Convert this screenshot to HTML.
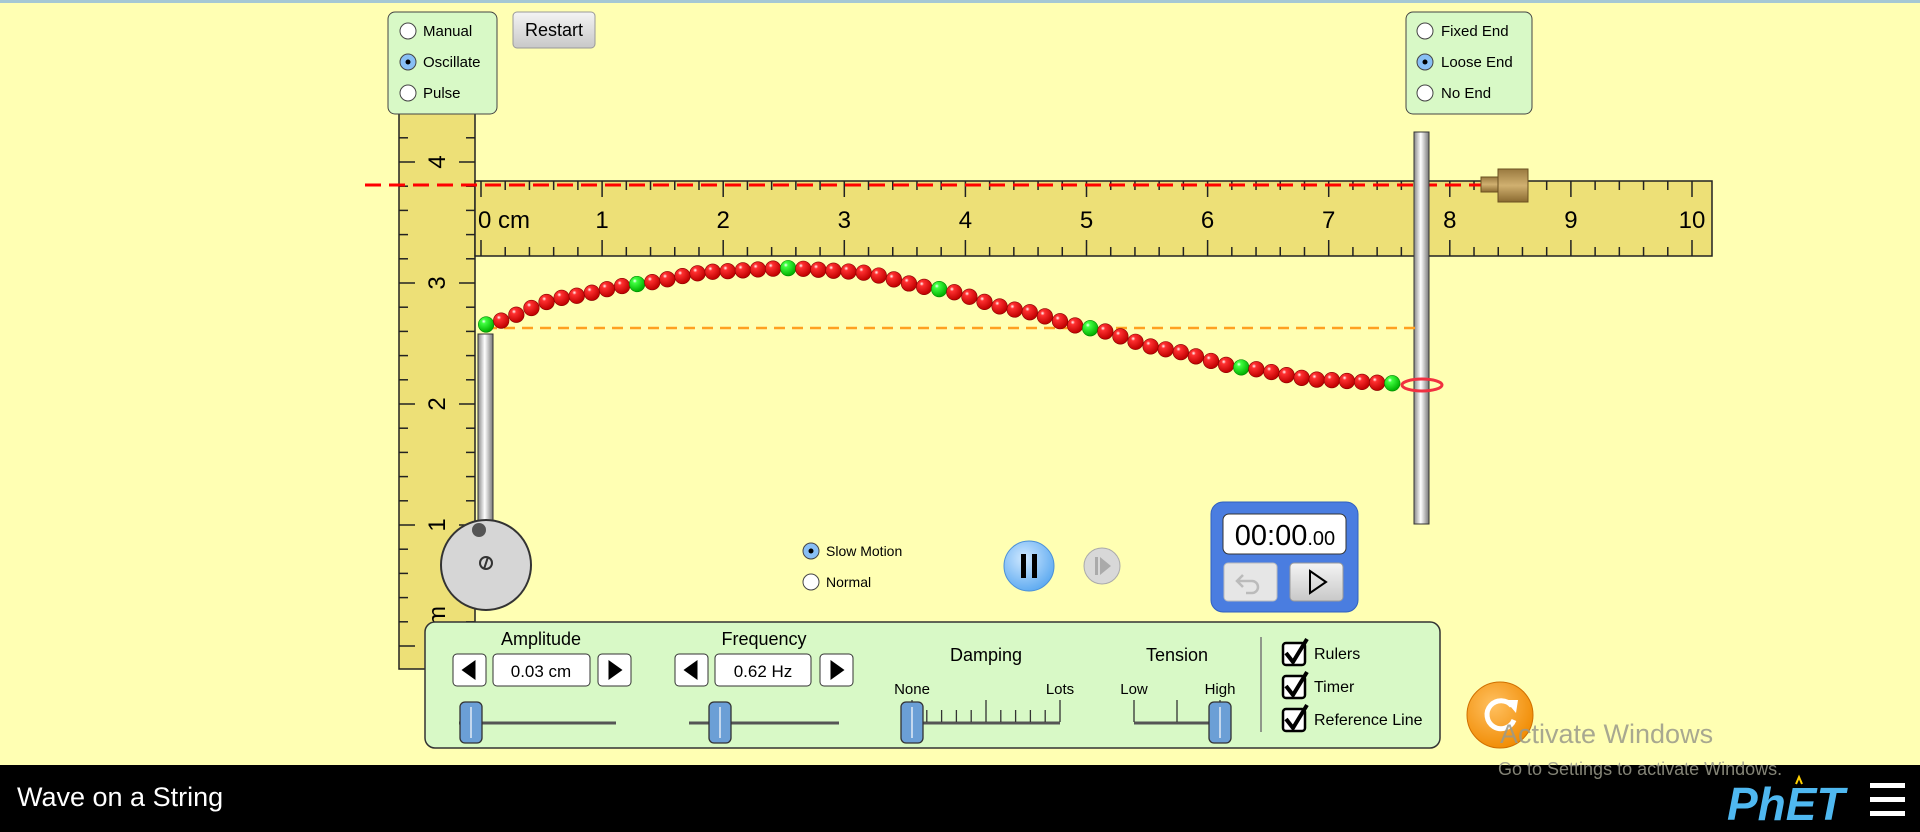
<!DOCTYPE html>
<html><head><meta charset="utf-8"><style>
html,body{margin:0;padding:0;width:1920px;height:832px;overflow:hidden;background:#ffffb3;font-family:"Liberation Sans",Arial,sans-serif}
svg{position:absolute;left:0;top:0}
text{font-family:"Liberation Sans",Arial,sans-serif}
</style></head><body>
<svg id="s" width="1920" height="832" viewBox="0 0 1920 832">
<defs>
<radialGradient id="rb" cx="35%" cy="30%" r="70%"><stop offset="0" stop-color="#fff"/><stop offset="0.2" stop-color="#ff3030"/><stop offset="1" stop-color="#c00000"/></radialGradient>
<radialGradient id="gb" cx="35%" cy="30%" r="70%"><stop offset="0" stop-color="#fff"/><stop offset="0.2" stop-color="#40ff40"/><stop offset="1" stop-color="#00b000"/></radialGradient>
<linearGradient id="rod" x1="0" x2="1"><stop offset="0" stop-color="#888"/><stop offset="0.45" stop-color="#fff"/><stop offset="1" stop-color="#777"/></linearGradient>
<linearGradient id="brass" x1="0" y1="0" x2="0" y2="1"><stop offset="0" stop-color="#9a7a40"/><stop offset="0.5" stop-color="#d0b070"/><stop offset="1" stop-color="#8a6a30"/></linearGradient>
<radialGradient id="pb" cx="40%" cy="35%" r="70%"><stop offset="0" stop-color="#cfe8ff"/><stop offset="1" stop-color="#5aa8f0"/></radialGradient>
<radialGradient id="or" cx="40%" cy="35%" r="70%"><stop offset="0" stop-color="#ffc060"/><stop offset="1" stop-color="#f08a00"/></radialGradient>
<linearGradient id="btn" x1="0" y1="0" x2="0" y2="1"><stop offset="0" stop-color="#f4f4f4"/><stop offset="1" stop-color="#c8c8c8"/></linearGradient>
</defs>
<rect x="0" y="0" width="1920" height="3" fill="#a5c8d4"/>
<rect x="399" y="110" width="76" height="559" fill="#ede077" stroke="#222" stroke-width="1.5"/>
<g id="vt"></g>
<rect x="475" y="181" width="1237" height="75" fill="#ede077" stroke="#222" stroke-width="1.5"/>
<g id="ht"></g>
<rect x="388" y="12" width="109" height="102" rx="7" fill="#d8f9c6" stroke="#444" stroke-width="1"/>
<g font-size="15" fill="#000">
<circle cx="408" cy="31" r="8" fill="#fff" stroke="#444"/><text x="423" y="36">Manual</text>
<circle cx="408" cy="62" r="8" fill="#88bff5" stroke="#444"/><circle cx="408" cy="62" r="2.5" fill="#000"/><text x="423" y="67">Oscillate</text>
<circle cx="408" cy="93" r="8" fill="#fff" stroke="#444"/><text x="423" y="98">Pulse</text>
</g>
<rect x="513" y="12" width="82" height="36" rx="4" fill="url(#btn)" stroke="#999"/>
<text x="554" y="36" font-size="18" text-anchor="middle">Restart</text>
<rect x="1406" y="12" width="126" height="102" rx="7" fill="#d8f9c6" stroke="#444" stroke-width="1"/>
<g font-size="15" fill="#000">
<circle cx="1425" cy="31" r="8" fill="#fff" stroke="#444"/><text x="1441" y="36">Fixed End</text>
<circle cx="1425" cy="62" r="8" fill="#88bff5" stroke="#444"/><circle cx="1425" cy="62" r="2.5" fill="#000"/><text x="1441" y="67">Loose End</text>
<circle cx="1425" cy="93" r="8" fill="#fff" stroke="#444"/><text x="1441" y="98">No End</text>
</g>
<line x1="365" y1="185" x2="1488" y2="185" stroke="#f00" stroke-width="3" stroke-dasharray="16,8"/>
<rect x="1481" y="177" width="18" height="15" fill="url(#brass)" stroke="#6a5020"/>
<rect x="1498" y="169" width="30" height="33" fill="url(#brass)" stroke="#6a5020"/>
<rect x="1414" y="132" width="15" height="392" fill="url(#rod)" stroke="#333"/>
<line x1="486" y1="328" x2="1420" y2="328" stroke="#ffa020" stroke-width="2.5" stroke-dasharray="11,7"/>
<rect x="478" y="334" width="15" height="190" fill="url(#rod)" stroke="#333"/>
<circle cx="486" cy="565" r="45" fill="#d6d6d6" stroke="#333" stroke-width="2"/>
<circle cx="479" cy="530" r="7" fill="#555"/>
<circle cx="486" cy="563" r="6" fill="none" stroke="#333" stroke-width="2"/><line x1="484" y1="569" x2="488" y2="557" stroke="#333" stroke-width="2"/>
<g id="beads"></g>
<ellipse cx="1422" cy="385" rx="20" ry="6" fill="none" stroke="#f03040" stroke-width="3"/>
<g font-size="14">
<circle cx="811" cy="551" r="8" fill="#88bff5" stroke="#444"/><circle cx="811" cy="551" r="2.5" fill="#000"/><text x="826" y="556">Slow Motion</text>
<circle cx="811" cy="582" r="8" fill="#fff" stroke="#444"/><text x="826" y="587">Normal</text>
</g>
<circle cx="1029" cy="566" r="25" fill="url(#pb)" stroke="#4a90d8"/>
<rect x="1021" y="554" width="5" height="24" fill="#000"/><rect x="1032" y="554" width="5" height="24" fill="#000"/>
<circle cx="1102" cy="566" r="18" fill="#d8d8d8" stroke="#aaa"/>
<rect x="1095" y="557" width="3" height="18" fill="#aaa"/><path d="M1100 557 L1111 566 L1100 575Z" fill="#aaa"/>
<rect x="1211" y="502" width="147" height="110" rx="12" fill="#4a7de0" stroke="#3060c0"/>
<rect x="1223" y="514" width="123" height="40" rx="6" fill="#fff" stroke="#333"/>
<text x="1285" y="545" font-size="29" text-anchor="middle">00:00<tspan font-size="20">.00</tspan></text>
<rect x="1224" y="563" width="53" height="38" rx="4" fill="#e6e6e6" stroke="#bbb"/>
<path d="M1243 575 L1237 581 L1243 587 M1238 581 H1252 a6 6 0 0 1 0 12 H1246" fill="none" stroke="#bbb" stroke-width="2.5"/>
<rect x="1290" y="563" width="53" height="38" rx="4" fill="url(#btn)" stroke="#999"/>
<path d="M1310 571 L1326 582 L1310 593Z" fill="none" stroke="#000" stroke-width="2"/>
<rect x="425" y="622" width="1015" height="126" rx="10" fill="#d8f9c6" stroke="#333" stroke-width="1.5"/>
<g font-size="18" text-anchor="middle">
<text x="541" y="645">Amplitude</text><text x="764" y="645">Frequency</text>
<text x="986" y="661">Damping</text><text x="1177" y="661">Tension</text>
</g>
<g id="arrows"></g>
<text x="541" y="677" font-size="17" text-anchor="middle">0.03 cm</text>
<text x="763" y="677" font-size="17" text-anchor="middle">0.62 Hz</text>
<g font-size="15" text-anchor="middle"><text x="912" y="694">None</text><text x="1060" y="694">Lots</text><text x="1134" y="694">Low</text><text x="1220" y="694">High</text></g>
<g stroke="#555" stroke-width="3"><line x1="459" y1="723" x2="616" y2="723"/><line x1="689" y1="723" x2="839" y2="723"/><line x1="909" y1="723" x2="1060" y2="723"/><line x1="1134" y1="723" x2="1225" y2="723"/></g>
<g id="sticks" stroke="#333" stroke-width="1.3"></g>
<g id="thumbs"></g>
<line x1="1261" y1="637" x2="1261" y2="732" stroke="#777" stroke-width="1.5"/>
<g id="checks"></g>
<g font-size="16"><text x="1314" y="659">Rulers</text><text x="1314" y="692">Timer</text><text x="1314" y="725">Reference Line</text></g>
<circle cx="1500" cy="715" r="33" fill="url(#or)" stroke="#d07000"/>
<path d="M1512 706 A14 14 0 1 0 1514 720" fill="none" stroke="#fff" stroke-width="5"/>
<path d="M1505 700 L1518 700 L1516 713Z" fill="#fff"/>
<rect x="0" y="765" width="1920" height="67" fill="#000"/>
<text x="1500" y="743" font-size="27" fill="#9a9a8a" opacity="0.85">Activate Windows</text>
<text x="1498" y="775" font-size="18" fill="#9a9a8a" opacity="0.85">Go to Settings to activate Windows.</text>
<text x="17" y="806" font-size="27" fill="#fff">Wave on a String</text>
<text x="1727" y="820" font-size="46" font-weight="bold" fill="#4fb8f0" font-style="italic">PhET</text>
<path d="M1796 784 l3 -7 l3 7" stroke="#ffd000" stroke-width="2" fill="none"/>
<g fill="#fff"><rect x="1870" y="783" width="35" height="5"/><rect x="1870" y="797" width="35" height="5"/><rect x="1870" y="811" width="35" height="5"/></g>
</svg>
<script>
var NS="http://www.w3.org/2000/svg";
function el(p,t,a,txt){var e=document.createElementNS(NS,t);for(var k in a)e.setAttribute(k,a[k]);if(txt!=null)e.textContent=txt;document.getElementById(p).appendChild(e);return e;}
for(var i=0;i<=50;i++){var x=481+121.1*i/5;var L=(i%5==0)?16:9;
el("ht","line",{x1:x,y1:181,x2:x,y2:181+L,stroke:"#222","stroke-width":1.5});
el("ht","line",{x1:x,y1:256,x2:x,y2:256-L,stroke:"#222","stroke-width":1.5});
if(i%5==0){var n=i/5;el("ht","text",{x:(n==0?478:x),y:228,"font-size":24,"text-anchor":(n==0?"start":"middle")},n==0?"0 cm":String(n));}}
for(var i=0;i<=22;i++){var y=646-121*i/5;if(y<116)continue;var L=(i%5==0)?16:9;
el("vt","line",{x1:399,y1:y,x2:399+L,y2:y,stroke:"#222","stroke-width":1.5});
el("vt","line",{x1:475,y1:y,x2:475-L,y2:y,stroke:"#222","stroke-width":1.5});
if(i%5==0&&i>0){el("vt","text",{x:0,y:0,"font-size":24,"text-anchor":"middle",transform:"translate(445 "+y+") rotate(-90)"},String(i/5));}}
el("vt","text",{x:0,y:0,"font-size":24,"text-anchor":"middle",transform:"translate(445 622) rotate(-90)"},"cm");
var P=[[397,265],[460,243],[520,232],[580,222],[643,219],[700,222],[766,236],[830,253],[890,268],[950,285],[1013,300],[1075,310],[1137,313]];
var s=1920/1568;
function yAt(x){for(var i=0;i<P.length-1;i++){if(x<=P[i+1][0]){var a=P[i],b=P[i+1];var t=(x-a[0])/(b[0]-a[0]);var t2=(1-Math.cos(t*Math.PI))/2;return a[1]+(b[1]-a[1])*(t*0.5+t2*0.5);}}return P[P.length-1][1];}
for(var i=0;i<=60;i++){var xd=397+(1137-397)*i/60;var yd=yAt(xd);
el("beads","circle",{cx:xd*s,cy:yd*s,r:7.8,fill:(i%10==0)?"url(#gb)":"url(#rb)",stroke:(i%10==0)?"#080":"#800","stroke-width":0.6});}
function arrow(x,dir){el("arrows","rect",{x:x,y:654,width:33,height:32,rx:4,fill:"#fff",stroke:"#333"});
var cx=x+16.5;el("arrows","path",{d:dir<0?("M"+(cx+6)+" 660 L"+(cx-8)+" 670 L"+(cx+6)+" 680Z"):("M"+(cx-6)+" 660 L"+(cx+8)+" 670 L"+(cx-6)+" 680Z"),fill:"#000"});}
arrow(453,-1);arrow(598,1);arrow(675,-1);arrow(820,1);
el("arrows","rect",{x:493,y:654,width:97,height:32,rx:4,fill:"#fff",stroke:"#333"});
el("arrows","rect",{x:715,y:654,width:96,height:32,rx:4,fill:"#fff",stroke:"#333"});
for(var i=0;i<=10;i++){var x=912+148*i/10;var h=(i%5==0)?22:12;el("sticks","line",{x1:x,y1:722,x2:x,y2:722-h});}
[1134,1177,1220].forEach(function(x){el("sticks","line",{x1:x,y1:722,x2:x,y2:700});});
[471,720,912,1220].forEach(function(x){el("thumbs","rect",{x:x-11,y:702,width:22,height:41,rx:5,fill:"#6b9fd6",stroke:"#333","stroke-width":1.3});
el("thumbs","line",{x1:x,y1:707,x2:x,y2:738,stroke:"#fff","stroke-width":1.2});});
[653,686,719].forEach(function(y){el("checks","rect",{x:1283,y:y-10,width:22,height:22,rx:3,fill:"#fff",stroke:"#000","stroke-width":2.5});
el("checks","path",{d:"M1286 "+(y)+" L1293 "+(y+9)+" L1307 "+(y-14),fill:"none",stroke:"#000","stroke-width":4});});
</script>
</body></html>
